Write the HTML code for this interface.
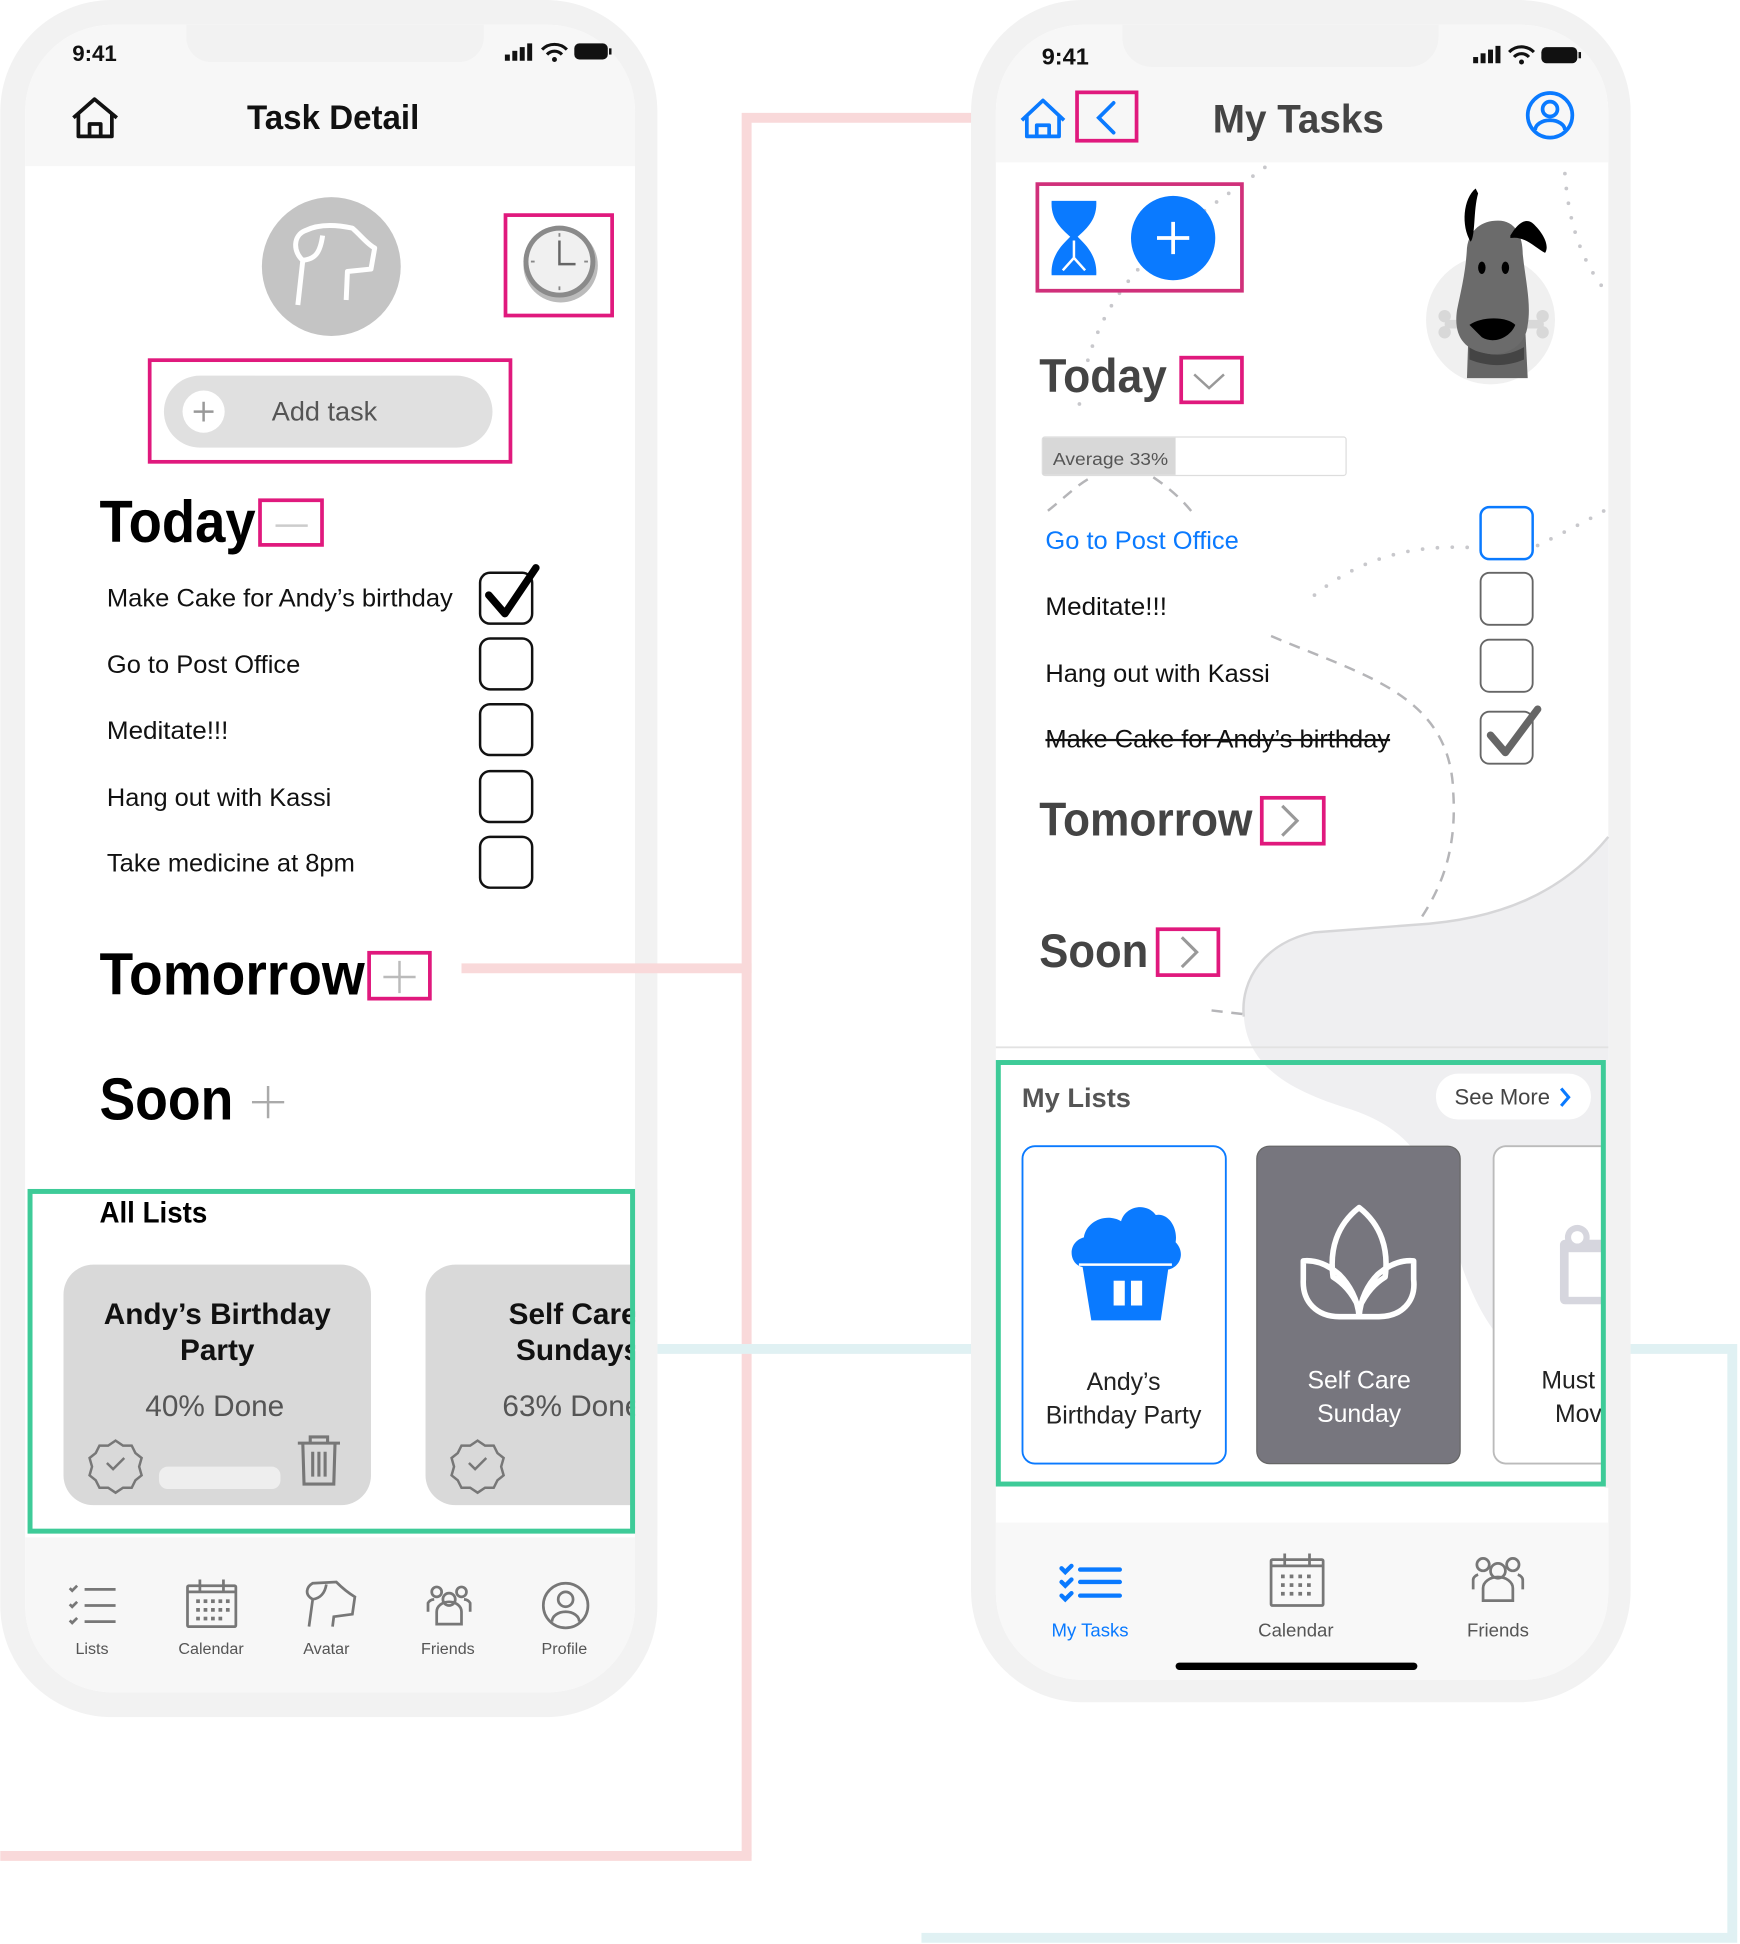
<!DOCTYPE html>
<html><head><meta charset="utf-8"><style>
html,body{margin:0;padding:0;background:#fff;}
svg{display:block;font-family:"Liberation Sans",Arial,sans-serif;}
</style></head><body>
<svg width="1740" height="1944" viewBox="0 0 1403 1568" xmlns="http://www.w3.org/2000/svg">
<!-- connector lines (behind) -->
<g fill="none">
<path d="M602,1497 V95 H825" stroke="#f9d9da" stroke-width="8"/>
<path d="M0,1497 H606" stroke="#f9d9da" stroke-width="8"/>
<path d="M530,1088 H790" stroke="#e0f1f3" stroke-width="8"/>
<path d="M1295,1088 H1397 V1563 H743" stroke="#e0f1f3" stroke-width="8"/>
</g>

<!-- LEFT PHONE -->
<rect x="0" y="0" width="530" height="1385" rx="90" fill="#f2f2f2"/>
<rect x="20" y="20" width="492" height="1345" rx="70" fill="#fff"/>
<path d="M20,134 V90 A70,70 0 0 1 90,20 H442 A70,70 0 0 1 512,90 V134 Z" fill="#f7f7f7"/>
<path d="M150,20 H390 V30 A20,20 0 0 1 370,50 H170 A20,20 0 0 1 150,30 Z" fill="#f2f2f2"/>
<path d="M20,1240 H512 V1295 A70,70 0 0 1 442,1365 H90 A70,70 0 0 1 20,1295 Z" fill="#f7f7f7"/>
<text x="58" y="49" font-size="18" font-weight="600" fill="#111">9:41</text>
<g fill="#111"><rect x="407" y="44" width="4" height="5"/><rect x="413" y="41" width="4" height="8"/><rect x="419" y="38" width="4" height="11"/><rect x="425" y="35" width="4" height="14"/></g>
<path d="M437,40 A14,14 0 0 1 457,40 M441,44 A8,8 0 0 1 453,44" stroke="#111" stroke-width="2.5" fill="none"/><circle cx="447" cy="48" r="2" fill="#111"/>
<rect x="463" y="35" width="27" height="13" rx="4" fill="#111"/><rect x="491" y="39" width="2" height="5" fill="#111"/>
<path d="M59,95 L76,80 L94,95 M63,92 V110 H90 V92 M72,110 V100 H81 V110" stroke="#111" stroke-width="3" fill="none" stroke-linejoin="round"/>
<text x="199" y="104" font-size="28" font-weight="600" fill="#111" textLength="139" lengthAdjust="spacingAndGlyphs">Task Detail</text>
<circle cx="267" cy="215" r="56" fill="#c4c4c4"/>
<path d="M240,246 L244,210 C236,203 236,190 246,186 C256,181 270,181 284,184 C291,190 296,197 302,200 L299,217 L280,219 L279,242 M244,210 C254,209 258,204 260,190" stroke="#fff" stroke-width="4" fill="none" stroke-linejoin="round"/>
<rect x="407.5" y="173.5" width="86" height="81" fill="none" stroke="#e0197d" stroke-width="3"/>
<circle cx="452" cy="214" r="30" fill="#bbb"/>
<circle cx="451" cy="211" r="29" fill="#8a8a8a"/>
<circle cx="451" cy="211" r="25" fill="#f0f0f0"/>
<path d="M451,194 V213 H464" stroke="#666" stroke-width="2" fill="none"/>
<g stroke="#888" stroke-width="1.5"><path d="M451,188 V191 M451,231 V234 M428,211 H431 M471,211 H474"/></g>
<rect x="120.5" y="290.5" width="291" height="82" fill="none" stroke="#e0197d" stroke-width="3"/>
<rect x="132" y="303" width="265" height="58" rx="29" fill="#e0e0e0"/>
<circle cx="164" cy="332" r="17" fill="#fff"/>
<path d="M164,324 V340 M156,332 H172" stroke="#999" stroke-width="2"/>
<text x="219" y="339" font-size="22" fill="#555" textLength="85" lengthAdjust="spacingAndGlyphs">Add task</text>
<text x="80" y="437" font-size="48" font-weight="700" fill="#000" textLength="126" lengthAdjust="spacingAndGlyphs">Today</text>
<rect x="209.5" y="403.5" width="50" height="36" fill="none" stroke="#e0197d" stroke-width="3"/>
<path d="M222,424 H248" stroke="#ccc" stroke-width="2"/>
<g font-size="20" fill="#111">
<text x="86" y="489" textLength="279" lengthAdjust="spacingAndGlyphs">Make Cake for Andy’s birthday</text>
<text x="86" y="543" textLength="156" lengthAdjust="spacingAndGlyphs">Go to Post Office</text>
<text x="86" y="596" textLength="98" lengthAdjust="spacingAndGlyphs">Meditate!!!</text>
<text x="86" y="650" textLength="181" lengthAdjust="spacingAndGlyphs">Hang out with Kassi</text>
<text x="86" y="703" textLength="200" lengthAdjust="spacingAndGlyphs">Take medicine at 8pm</text>
</g>
<g fill="none" stroke="#111" stroke-width="2">
<rect x="387" y="462" width="42" height="41" rx="8"/>
<rect x="387" y="515" width="42" height="41" rx="8"/>
<rect x="387" y="568" width="42" height="41" rx="8"/>
<rect x="387" y="622" width="42" height="41" rx="8"/>
<rect x="387" y="675" width="42" height="41" rx="8"/>
</g>
<path d="M394,480 L407,495 L432,458" stroke="#000" stroke-width="6" fill="none" stroke-linecap="round" stroke-linejoin="round"/>
<text x="80" y="802" font-size="48" font-weight="700" fill="#000" textLength="214" lengthAdjust="spacingAndGlyphs">Tomorrow</text>
<rect x="297.5" y="768.5" width="49" height="37" fill="none" stroke="#e0197d" stroke-width="3"/>
<path d="M322,775 V801 M309,788 H335" stroke="#bbb" stroke-width="2"/>
<text x="80" y="903" font-size="48" font-weight="700" fill="#000" textLength="108" lengthAdjust="spacingAndGlyphs">Soon</text>
<path d="M216,876 V902 M203,889 H229" stroke="#aaa" stroke-width="2"/>
<text x="80" y="986" font-size="24" font-weight="700" fill="#000" textLength="87" lengthAdjust="spacingAndGlyphs">All Lists</text>
<rect x="51" y="1020" width="248" height="194" rx="24" fill="#d9d9d9"/>
<text x="175" y="1068" font-size="24" font-weight="600" fill="#111" text-anchor="middle">Andy’s Birthday</text>
<text x="175" y="1097" font-size="24" font-weight="600" fill="#111" text-anchor="middle">Party</text>
<text x="173" y="1142" font-size="24" fill="#555" text-anchor="middle">40% Done</text>
<path d="M93,1162 l6,4 7,0 3,6 5,4 -2,7 2,7 -5,4 -3,6 -7,0 -6,4 -6,-4 -7,0 -3,-6 -5,-4 2,-7 -2,-7 5,-4 3,-6 7,0 z" fill="none" stroke="#777" stroke-width="2"/>
<path d="M86,1180 l5,5 9,-9" stroke="#777" stroke-width="2" fill="none"/>
<rect x="128" y="1183" width="98" height="18" rx="7" fill="#eee"/>
<path d="M240,1164 H274 M250,1164 V1159 H264 V1164 M244,1164 L245,1197 H269 L270,1164 M252,1171 V1191 M257,1171 V1191 M262,1171 V1191" stroke="#777" stroke-width="2.5" fill="none"/>
<path d="M343,1044 A24,24 0 0 1 367,1020 H510 V1214 H367 A24,24 0 0 1 343,1190 Z" fill="#d9d9d9"/>
<text x="410" y="1068" font-size="24" font-weight="600" fill="#111">Self Care</text>
<text x="416" y="1097" font-size="24" font-weight="600" fill="#111">Sundays</text>
<text x="405" y="1142" font-size="24" fill="#555">63% Done</text>
<path d="M385,1162 l6,4 7,0 3,6 5,4 -2,7 2,7 -5,4 -3,6 -7,0 -6,4 -6,-4 -7,0 -3,-6 -5,-4 2,-7 -2,-7 5,-4 3,-6 7,0 z" fill="none" stroke="#777" stroke-width="2"/>
<path d="M378,1180 l5,5 9,-9" stroke="#777" stroke-width="2" fill="none"/>
<rect x="510" y="959" width="2" height="280" fill="#fff"/>
<rect x="512" y="959" width="18" height="280" fill="#f2f2f2"/>
<rect x="24" y="961" width="486" height="274" fill="none" stroke="#3ecb98" stroke-width="4"/>
<g stroke="#777" stroke-width="2.2" fill="none">
<path d="M68,1282 H93 M68,1295 H93 M68,1308 H93 M56,1281 l2,2 4,-4 M56,1294 l2,2 4,-4 M56,1307 l2,2 4,-4"/>
<rect x="151" y="1279" width="39" height="33" rx="1"/><path d="M161,1274 V1284 M180,1274 V1284 M151,1284 H190"/>
<path d="M249,1312 L252,1290 C245,1286 247,1280 252,1277 L271,1276 C276,1281 281,1285 286,1288 L284,1302 L269,1304 L268,1312 M252,1290 C259,1289 262,1284 263,1278"/>
<circle cx="362" cy="1290" r="5"/><circle cx="352" cy="1284" r="4"/><circle cx="372" cy="1284" r="4"/><path d="M352,1310 V1300 A10,8 0 0 1 372,1300 V1310 Z M345,1300 V1293 A6,5 0 0 1 350,1290 M379,1300 V1293 A6,5 0 0 0 374,1290"/>
<circle cx="456" cy="1295" r="18"/><circle cx="456" cy="1290" r="6"/><path d="M445,1308 A11,8 0 0 1 467,1308"/>
</g>
<g font-size="13" fill="#555" text-anchor="middle">
<text x="74" y="1334">Lists</text><text x="170" y="1334">Calendar</text><text x="263" y="1334">Avatar</text><text x="361" y="1334">Friends</text><text x="455" y="1334">Profile</text>
</g>
<g fill="#777"><rect x="158" y="1290" width="3" height="3"/><rect x="164" y="1290" width="3" height="3"/><rect x="170" y="1290" width="3" height="3"/><rect x="176" y="1290" width="3" height="3"/><rect x="182" y="1290" width="3" height="3"/><rect x="158" y="1297" width="3" height="3"/><rect x="164" y="1297" width="3" height="3"/><rect x="170" y="1297" width="3" height="3"/><rect x="176" y="1297" width="3" height="3"/><rect x="182" y="1297" width="3" height="3"/><rect x="158" y="1304" width="3" height="3"/><rect x="164" y="1304" width="3" height="3"/><rect x="170" y="1304" width="3" height="3"/><rect x="176" y="1304" width="3" height="3"/></g>
<!-- pink connector over phone -->
<path d="M372,781 H606" stroke="#f9d9da" stroke-width="8"/>

<!-- RIGHT PHONE -->
<rect x="783" y="0" width="532" height="1373" rx="90" fill="#f2f2f2"/>
<rect x="803" y="20" width="494" height="1335" rx="70" fill="#fff"/>
<path d="M803,131 V90 A70,70 0 0 1 873,20 H1227 A70,70 0 0 1 1297,90 V131 Z" fill="#f7f7f7"/>
<path d="M905,20 H1160 V30 A24,24 0 0 1 1136,54 H929 A24,24 0 0 1 905,30 Z" fill="#f2f2f2"/>
<path d="M1297,675 C1260,720 1210,742 1140,746 L1060,752 C1020,760 1000,790 1003,820 C1006,860 1040,880 1090,895 C1140,912 1150,940 1165,975 C1175,1010 1185,1050 1210,1080 L1297,1130 Z" fill="#efeff1"/>
<path d="M1297,675 C1260,720 1210,742 1140,746 L1060,752 C1020,760 1000,790 1003,820" fill="none" stroke="#d6d6d8" stroke-width="2"/>
<rect x="803" y="844" width="494" height="1.5" fill="#e2e2e2"/>
<g fill="none" stroke="#c8c8cc" stroke-width="3" stroke-linecap="round" stroke-dasharray="0 12">
<path d="M1262,140 C1265,180 1275,210 1295,235"/>
<path d="M1020,135 C960,180 880,220 870,330"/>
<path d="M1060,480 C1110,440 1160,440 1194,442 M1240,440 C1260,430 1280,420 1297,410"/>
</g>
<g fill="none" stroke="#b5b5b8" stroke-width="2" stroke-dasharray="9 7">
<path d="M845,412 C860,400 870,390 880,385 M930,385 C945,395 955,405 962,414"/>
<path d="M1025,513 C1100,545 1170,560 1172,640 C1175,690 1160,720 1143,745"/>
<path d="M977,815 L1003,818"/>
</g>
<text x="840" y="52" font-size="19" font-weight="600" fill="#111">9:41</text>
<g fill="#111"><rect x="1188" y="46" width="4" height="5"/><rect x="1194" y="43" width="4" height="8"/><rect x="1200" y="40" width="4" height="11"/><rect x="1206" y="37" width="4" height="14"/></g>
<path d="M1217,42 A14,14 0 0 1 1237,42 M1221,46 A8,8 0 0 1 1233,46" stroke="#111" stroke-width="2.5" fill="none"/><circle cx="1227" cy="50" r="2" fill="#111"/>
<rect x="1243" y="38" width="29" height="13" rx="4" fill="#111"/><rect x="1273" y="42" width="2" height="5" fill="#111"/>
<path d="M824,97 L841,81 L858,97 M828,94 V110 H854 V94 M836,110 V101 H846 V110" stroke="#0a7aff" stroke-width="3" fill="none" stroke-linejoin="round"/>
<rect x="868.5" y="74.5" width="48" height="39" fill="none" stroke="#e0197d" stroke-width="3"/>
<path d="M898,83 L886,95 L898,107" stroke="#0a7aff" stroke-width="3" fill="none" stroke-linecap="round"/>
<text x="978" y="107" font-size="32" font-weight="600" fill="#444" textLength="138" lengthAdjust="spacingAndGlyphs">My Tasks</text>
<circle cx="1250" cy="93" r="18" stroke="#0a7aff" stroke-width="3" fill="none"/><circle cx="1250" cy="88" r="6" stroke="#0a7aff" stroke-width="3" fill="none"/><path d="M1238,105 A12,8 0 0 1 1262,105" stroke="#0a7aff" stroke-width="3" fill="none"/>
<rect x="836.5" y="148.5" width="165" height="86" fill="none" stroke="#d0307a" stroke-width="3"/>
<path d="M848,162 H884 C885,178 875,185 869,191 C875,197 885,206 884,222 H848 C847,206 857,197 863,191 C857,185 847,178 848,162 Z" fill="#0a7aff"/>
<path d="M857,218 L866,208 V194 M875,218 L866,208" stroke="#fff" stroke-width="2" fill="none"/>
<circle cx="946" cy="192" r="34" fill="#0a7aff"/>
<path d="M946,179 V205 M933,192 H959" stroke="#fff" stroke-width="3"/>
<circle cx="1202" cy="258" r="52" fill="#f0f0f0"/>
<g fill="#d8d8d8"><rect x="1165" y="258" width="80" height="7" rx="3"/><circle cx="1165" cy="255" r="5"/><circle cx="1165" cy="268" r="5"/><circle cx="1244" cy="255" r="5"/><circle cx="1244" cy="268" r="5"/></g>
<path d="M1185,245 L1183,305 H1232 L1229,245 Z" fill="#666"/>
<path d="M1185,280 C1200,288 1215,288 1229,280 V290 C1215,296 1200,296 1185,290 Z" fill="#444"/>
<path d="M1183,200 C1185,185 1195,178 1208,178 C1222,178 1228,190 1228,205 C1230,225 1235,245 1232,262 C1230,282 1210,288 1198,285 C1180,282 1172,270 1175,250 C1178,235 1182,220 1183,200 Z" fill="#6b6b6b"/>
<path d="M1190,152 C1180,160 1178,182 1186,195 C1190,190 1188,170 1192,156 Z" fill="#000"/>
<path d="M1218,190 C1225,178 1232,175 1238,182 C1244,188 1250,198 1246,204 C1238,200 1230,190 1218,192 Z" fill="#000"/>
<ellipse cx="1195" cy="216" rx="3" ry="5" fill="#000"/><ellipse cx="1214" cy="216" rx="3" ry="5" fill="#000"/>
<path d="M1185,262 C1195,255 1215,255 1222,262 C1218,272 1205,278 1195,272 Z" fill="#000"/>
<text x="838" y="316" font-size="38" font-weight="700" fill="#444" textLength="103" lengthAdjust="spacingAndGlyphs">Today</text>
<rect x="952.5" y="288.5" width="49" height="36" fill="none" stroke="#e0197d" stroke-width="3"/>
<path d="M963,302 L975,313 L987,302" stroke="#999" stroke-width="2" fill="none"/>
<rect x="840.5" y="352.5" width="245" height="31" rx="2" fill="#fff" stroke="#ddd"/>
<rect x="841" y="353" width="107" height="30" fill="#d8d8d8"/>
<text x="849" y="375" font-size="14" fill="#555" textLength="93" lengthAdjust="spacingAndGlyphs">Average 33%</text>
<g font-size="20">
<text x="843" y="443" fill="#0a7aff" textLength="156" lengthAdjust="spacingAndGlyphs">Go to Post Office</text>
<text x="843" y="496" fill="#111" textLength="98" lengthAdjust="spacingAndGlyphs">Meditate!!!</text>
<text x="843" y="550" fill="#111" textLength="181" lengthAdjust="spacingAndGlyphs">Hang out with Kassi</text>
<text x="843" y="603" fill="#111" textLength="278" lengthAdjust="spacingAndGlyphs">Make Cake for Andy’s birthday</text>
</g>
<rect x="843" y="596" width="278" height="1.8" fill="#111"/>
<rect x="1194" y="409" width="42" height="42" rx="7" fill="#fff" stroke="#0a7aff" stroke-width="2"/>
<g fill="#fff" stroke="#666" stroke-width="1.5">
<rect x="1194" y="462" width="42" height="42" rx="7"/><rect x="1194" y="516" width="42" height="42" rx="7"/><rect x="1194" y="574" width="42" height="42" rx="7"/>
</g>
<path d="M1202,593 L1214,607 L1240,572" stroke="#666" stroke-width="6" fill="none" stroke-linecap="round" stroke-linejoin="round"/>
<text x="838" y="674" font-size="38" font-weight="700" fill="#444" textLength="172" lengthAdjust="spacingAndGlyphs">Tomorrow</text>
<rect x="1017.5" y="643.5" width="50" height="37" fill="none" stroke="#e0197d" stroke-width="3"/>
<path d="M1034,650 L1046,662 L1034,674" stroke="#999" stroke-width="2.5" fill="none"/>
<text x="838" y="780" font-size="38" font-weight="700" fill="#444" textLength="88" lengthAdjust="spacingAndGlyphs">Soon</text>
<rect x="933.5" y="749.5" width="49" height="37" fill="none" stroke="#e0197d" stroke-width="3"/>
<path d="M953,756 L965,768 L953,780" stroke="#999" stroke-width="2.5" fill="none"/>
<text x="824" y="893" font-size="22" font-weight="700" fill="#555" textLength="88" lengthAdjust="spacingAndGlyphs">My Lists</text>
<rect x="1158" y="866" width="125" height="37" rx="18" fill="#fff"/>
<text x="1173" y="891" font-size="18" fill="#444" textLength="77" lengthAdjust="spacingAndGlyphs">See More</text>
<path d="M1259,878 L1265,885 L1259,892" stroke="#0a7aff" stroke-width="2.5" fill="none"/>
<rect x="824.5" y="924.5" width="164" height="256" rx="10" fill="#fff" stroke="#0a7aff" stroke-width="1.5"/>
<path d="M873,1022 C862,1020 860,1002 874,998 C876,985 892,978 904,985 C908,972 925,970 932,980 C942,978 950,990 948,1002 C956,1010 952,1022 942,1024 L936,1065 H880 Z" fill="#0a7aff"/>
<path d="M870,1020 H945" stroke="#fff" stroke-width="2"/>
<rect x="898" y="1033" width="9" height="20" fill="#fff"/><rect x="912" y="1033" width="9" height="20" fill="#fff"/>
<text x="906" y="1121" font-size="20" fill="#222" text-anchor="middle">Andy’s</text>
<text x="906" y="1148" font-size="20" fill="#222" text-anchor="middle">Birthday Party</text>
<rect x="1013.5" y="924.5" width="164" height="256" rx="10" fill="#77767e" stroke="#666"/>
<path d="M1096,974 C1078,988 1072,1008 1075,1030 C1083,1035 1090,1042 1096,1055 C1102,1042 1109,1035 1117,1030 C1120,1008 1114,988 1096,974 Z M1051,1017 C1062,1016 1072,1021 1080,1028 C1088,1036 1095,1048 1096,1062 H1080 C1062,1062 1050,1050 1051,1032 Z M1140,1017 C1129,1016 1119,1021 1111,1028 C1103,1036 1097,1048 1096,1062 H1112 C1130,1062 1142,1050 1140,1032 Z" fill="none" stroke="#fff" stroke-width="4.5" stroke-linejoin="round"/>
<text x="1096" y="1120" font-size="20" fill="#fff" text-anchor="middle">Self Care</text>
<text x="1096" y="1147" font-size="20" fill="#fff" text-anchor="middle">Sunday</text>
<path d="M1295,924.5 H1214 A10,10 0 0 0 1204.5,934 V1171 A10,10 0 0 0 1214,1180.5 H1295" fill="#fff" stroke="#bbb" stroke-width="1.5"/>
<rect x="1258" y="1000" width="37" height="52" rx="4" fill="#d6d6de"/>
<rect x="1265" y="1010" width="30" height="36" fill="#fff"/>
<circle cx="1272" cy="998" r="10" fill="#d6d6de"/><circle cx="1272" cy="998" r="5" fill="#fff"/>
<text x="1243" y="1120" font-size="20" fill="#222">Must</text>
<text x="1254" y="1147" font-size="20" fill="#222">Mov</text>
<rect x="1294" y="855" width="20" height="345" fill="#f2f2f2"/>
<rect x="805" y="857" width="488" height="340" fill="none" stroke="#3ecb98" stroke-width="4"/>
<path d="M803,1228 H1297 V1285 A70,70 0 0 1 1227,1355 H873 A70,70 0 0 1 803,1285 Z" fill="#f8f8f8"/>
<g stroke="#0a7aff" stroke-width="3.5" fill="none" stroke-linecap="round">
<path d="M871,1266 H903 M871,1276 H903 M871,1287 H903 M856,1265 l3,3 5,-5 M856,1276 l3,3 5,-5 M856,1287 l3,3 5,-5"/>
</g>
<g stroke="#777" stroke-width="2.2" fill="none">
<rect x="1025" y="1258" width="42" height="37" rx="1"/><path d="M1036,1253 V1263 M1056,1253 V1263 M1025,1263 H1067"/>
<circle cx="1208" cy="1267" r="6"/><circle cx="1196" cy="1262" r="5"/><circle cx="1220" cy="1262" r="5"/><path d="M1196,1291 V1281 A12,9 0 0 1 1220,1281 V1291 Z M1188,1282 V1275 A7,5 0 0 1 1192,1270 M1228,1282 V1275 A7,5 0 0 0 1224,1270"/>
</g>
<g fill="#777"><rect x="1033" y="1270" width="3" height="3"/><rect x="1040" y="1270" width="3" height="3"/><rect x="1047" y="1270" width="3" height="3"/><rect x="1054" y="1270" width="3" height="3"/><rect x="1033" y="1277" width="3" height="3"/><rect x="1040" y="1277" width="3" height="3"/><rect x="1047" y="1277" width="3" height="3"/><rect x="1054" y="1277" width="3" height="3"/><rect x="1033" y="1284" width="3" height="3"/><rect x="1040" y="1284" width="3" height="3"/><rect x="1047" y="1284" width="3" height="3"/><rect x="1054" y="1284" width="3" height="3"/></g>
<g font-size="15" text-anchor="middle">
<text x="879" y="1320" fill="#0a7aff">My Tasks</text><text x="1045" y="1320" fill="#555">Calendar</text><text x="1208" y="1320" fill="#555">Friends</text>
</g>
<rect x="948" y="1341" width="195" height="6" rx="3" fill="#000"/>
</svg>
</body></html>
